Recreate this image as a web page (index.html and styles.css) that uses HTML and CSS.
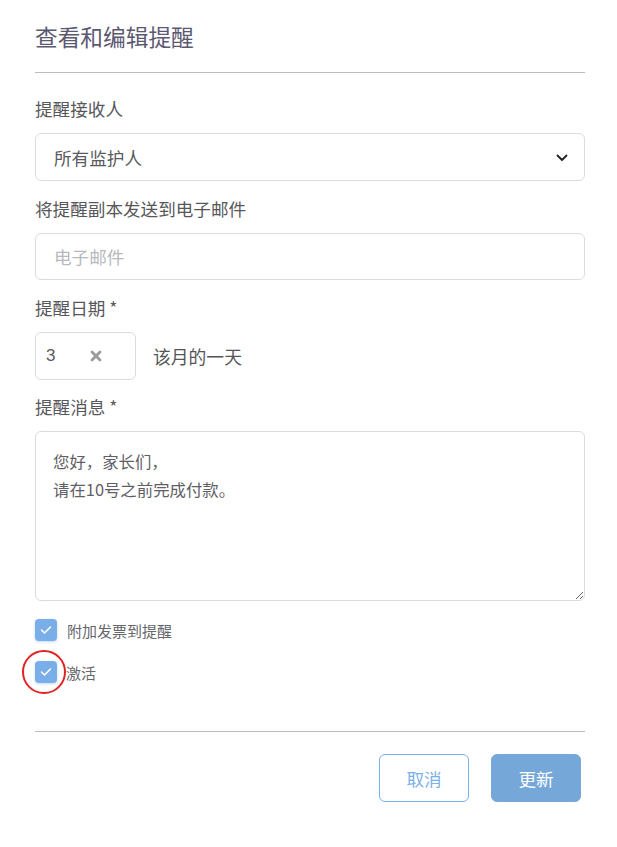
FILE: index.html
```html
<!DOCTYPE html>
<html lang="zh">
<head>
<meta charset="utf-8">
<link rel="stylesheet" href="styles.css">
</head>
<body>
<div class="modal">
  <h1 class="title">查看和编辑提醒</h1>
  <hr class="rule">
  <div class="field">
    <label class="label">提醒接收人</label>
    <div class="control select">
      <span>所有监护人</span>
      <svg class="chev" width="12" height="8" viewBox="0 0 12 8"><path d="M1.5 1.5 L6 6 L10.5 1.5" fill="none" stroke="#222" stroke-width="1.8" stroke-linecap="round" stroke-linejoin="round"/></svg>
    </div>
  </div>
  <div class="field">
    <label class="label">将提醒副本发送到电子邮件</label>
    <div class="control input"><span class="placeholder">电子邮件</span></div>
  </div>
  <div class="field">
    <label class="label">提醒日期 *</label>
    <div class="date-row">
      <div class="control day">
        <span class="num">3</span>
        <svg class="x" width="12" height="12" viewBox="0 0 12 12"><path d="M2 2 L10 10 M10 2 L2 10" stroke="#9a9a9f" stroke-width="2.8" stroke-linecap="round"/></svg>
      </div>
      <span class="day-text">该月的一天</span>
    </div>
  </div>
  <div class="field field-message">
    <label class="label">提醒消息 *</label>
    <textarea class="control message">您好，家长们，
请在10号之前完成付款。</textarea>
  </div>
  <div class="checks">
    <div class="check-row">
      <span class="box"><svg width="12" height="10" viewBox="0 0 12 10"><path d="M1.5 5 L4.5 8 L10.5 2" fill="none" stroke="#fff" stroke-width="1.6" stroke-linecap="round" stroke-linejoin="round"/></svg></span>
      <span class="check-text">附加发票到提醒</span>
    </div>
    <div class="check-row active-row">
      <span class="box"><svg width="12" height="10" viewBox="0 0 12 10"><path d="M1.5 5 L4.5 8 L10.5 2" fill="none" stroke="#fff" stroke-width="1.6" stroke-linecap="round" stroke-linejoin="round"/></svg></span>
      <span class="check-text">激活</span>
      <span class="ring"></span>
    </div>
  </div>
  <hr class="rule rule-bottom">
  <div class="actions">
    <button class="btn btn-cancel">取消</button>
    <button class="btn btn-primary">更新</button>
  </div>
</div>
</body>
</html>
```

FILE: styles.css
```css
* { box-sizing: border-box; }
html, body {
  margin: 0;
  padding: 0;
  background: #fff;
}
body {
  font-family: "Noto Sans CJK SC", "Noto Sans", sans-serif;
  color: #555558;
}
.modal {
  width: 617px;
  padding: 22px 32px 0 35px;
}
.title {
  margin: 0;
  font-size: 22.7px;
  line-height: 30px;
  font-weight: 400;
  color: #5b5872;
}
.rule {
  margin: 20px 0 0 0;
  border: 0;
  height: 1px;
  background: #bcbac5;
  width: 550px;
}
.field {
  display: flex;
  flex-direction: column;
  width: 550px;
  margin-top: 16px;
}
.rule + .field { margin-top: 24px; }
.field-message { margin-top: 15px; }
.label {
  display: block;
  font-size: 17.6px;
  line-height: 24px;
  color: #57575b;
  margin-bottom: 12px;
}
.control {
  border: 1px solid #dcdce0;
  border-radius: 6px;
  background: #fff;
}
.select, .input {
  height: 48px;
  display: flex;
  align-items: center;
  padding: 0 16px 0 18px;
  font-size: 17.6px;
  color: #5a5a60;
}
.input { height: 47px; }
.select { justify-content: space-between; }
.chev { margin-top: 1px; }
.placeholder { color: #b8b8be; }
.date-row {
  display: flex;
  align-items: center;
}
.day {
  width: 101px;
  height: 48px;
  display: flex;
  align-items: center;
  padding: 0 0 0 10px;
  font-size: 17px;
}
.num {
  font-family: "Liberation Sans", sans-serif;
  color: #5a5a60;
  width: 44px;
}
.day-text {
  margin-left: 17px;
  font-size: 17.8px;
  color: #555558;
}
.message {
  display: block;
  width: 550px;
  height: 170px;
  padding: 15px 17px;
  font-family: "Noto Sans CJK SC", sans-serif;
  font-size: 16.4px;
  line-height: 28px;
  color: #5f5f66;
  resize: vertical;
  outline: none;
}
.checks {
  display: flex;
  flex-direction: column;
  gap: 20px;
  margin-top: 18px;
}
.check-row {
  position: relative;
  display: flex;
  align-items: center;
  height: 22px;
}
.box {
  width: 22px;
  height: 22px;
  border-radius: 4px;
  background: #7aaee9;
  box-shadow: 0 1px 3px rgba(122, 174, 233, 0.45);
  display: flex;
  align-items: center;
  justify-content: center;
}
.check-text {
  margin-left: 10px;
  font-size: 15px;
  color: #66666c;
}
.active-row .check-text { margin-left: 9px; }
.ring {
  position: absolute;
  left: -13px;
  top: -11px;
  width: 44px;
  height: 44px;
  border: 2px solid #e02424;
  border-radius: 50%;
}
.rule-bottom { margin-top: 48px; }
.actions {
  width: 546px;
  display: flex;
  justify-content: flex-end;
  gap: 22px;
  margin-top: 22px;
}
.btn {
  width: 90px;
  height: 48px;
  border-radius: 6px;
  font-family: "Noto Sans CJK SC", sans-serif;
  font-size: 17.6px;
  cursor: pointer;
}
.btn-cancel {
  background: #fff;
  border: 1px solid #7ab0ea;
  color: #7ab0ea;
}
.btn-primary {
  background: #76a7d9;
  border: 1px solid #76a7d9;
  color: #fff;
}
```
